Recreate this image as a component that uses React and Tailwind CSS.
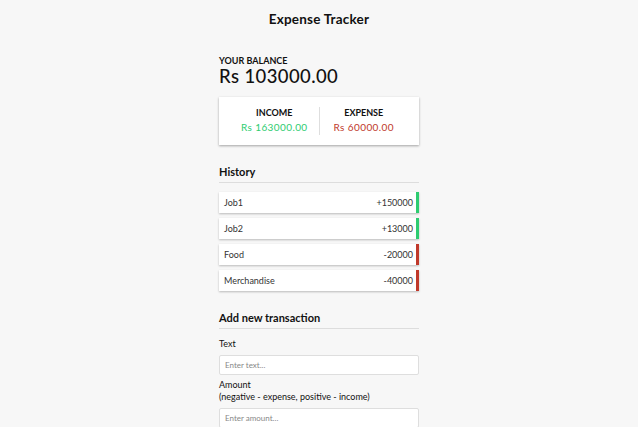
export default function App() {
  const items = [
    { t: "Job1", a: "+150000", plus: true },
    { t: "Job2", a: "+13000", plus: true },
    { t: "Food", a: "-20000", plus: false },
    { t: "Merchandise", a: "-40000", plus: false },
  ];
  return (
    <div className="min-h-[427px] w-full bg-[#f7f7f7] text-[#111]" style={{ fontFamily: "Lato, 'Open Sans', sans-serif" }}>
      <h2 className="pt-[10px] text-center text-[13.5px] leading-[18px] font-bold tracking-[0.2px]">Expense Tracker</h2>
      <div className="mx-auto w-[200px]">
        <h4 className="mt-[28px] text-[9px] leading-[10px] font-bold uppercase">Your Balance</h4>
        <h1 className="text-[18.5px] leading-[20px] font-medium tracking-[0.4px]">Rs 103000.00</h1>
        <div className="mt-[11px] flex bg-white px-[11px] py-[10px] shadow-[0_1px_3px_rgba(0,0,0,0.12),0_1px_2px_rgba(0,0,0,0.24)]">
          <div className="flex-1 border-r border-[#dedede] text-center">
            <h4 className="text-[9px] leading-[12px] font-bold uppercase">Income</h4>
            <p className="text-[10px] leading-[16px] tracking-[0.4px] text-[#2ecc71]">Rs 163000.00</p>
          </div>
          <div className="flex-1 text-center">
            <h4 className="text-[9px] leading-[12px] font-bold uppercase">Expense</h4>
            <p className="text-[10px] leading-[16px] tracking-[0.4px] text-[#c0392b]">Rs 60000.00</p>
          </div>
        </div>
        <h3 className="mt-[20px] border-b border-[#ddd] pb-[3px] text-[11px] leading-[14px] font-bold">History</h3>
        <ul className="mt-[9px] flex flex-col gap-[5px]">
          {items.map((i) => (
            <li
              key={i.t}
              className={`flex h-[21px] items-center justify-between bg-white pl-[5px] pr-[3px] text-[9px] text-[#333] shadow-[0_1px_2px_rgba(0,0,0,0.25)] border-r-[3px] ${i.plus ? "border-[#2ecc71]" : "border-[#c0392b]"}`}
            >
              <span>{i.t}</span>
              <span>{i.a}</span>
            </li>
          ))}
        </ul>
        <h3 className="mt-[20px] border-b border-[#ddd] pb-[3px] text-[11px] leading-[14px] font-bold">Add new transaction</h3>
        <label className="mt-[9px] block text-[9px] leading-[12px]">Text</label>
        <input
          type="text"
          placeholder="Enter text..."
          className="mt-[5px] block h-[20px] w-full rounded-[2px] border border-[#dedede] bg-white px-[5px] text-[8px] outline-none placeholder:text-[#888]"
        />
        <label className="mt-[4px] block text-[9px] leading-[12px]">
          Amount <br />
          (negative - expense, positive - income)
        </label>
        <input
          type="number"
          placeholder="Enter amount..."
          className="mt-[5px] block h-[20px] w-full rounded-[2px] border border-[#dedede] bg-white px-[5px] text-[8px] outline-none placeholder:text-[#888]"
        />
      </div>
    </div>
  );
}
